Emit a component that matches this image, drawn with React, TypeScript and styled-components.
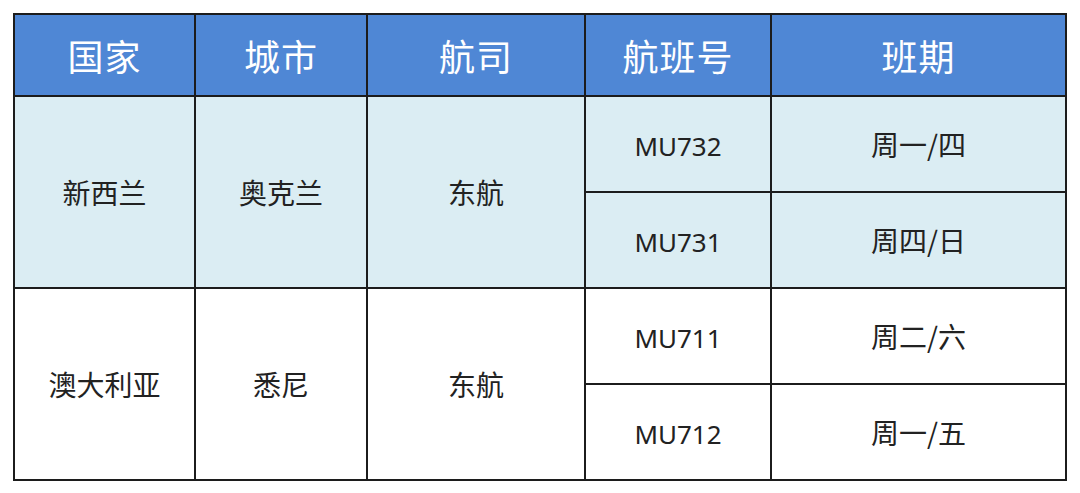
import React from "react";
import styled, { createGlobalStyle } from "styled-components";

const Global = createGlobalStyle`
  html, body { margin: 0; padding: 0; background: #ffffff; }
  body { font-family: "Noto Sans CJK SC", "Noto Sans", sans-serif; }
`;

const Page = styled.div`
  padding: 13px 0 0 13px;
`;

const Table = styled.table`
  border-collapse: collapse;
  table-layout: fixed;
  width: 1054px;
  border: 2px solid #1c1c1c;
`;

const HeadCell = styled.th`
  background: #4f87d5;
  color: #ffffff;
  font-size: 36px;
  font-weight: 400;
  height: 80px;
  padding: 0;
  border: 2px solid #1c1c1c;
  text-align: center;
  vertical-align: middle;
  letter-spacing: 1px;
`;

const Cell = styled.td<{ $tint?: boolean }>`
  background: ${(p) => (p.$tint ? "#dbedf3" : "#ffffff")};
  color: #222222;
  font-size: 28px;
  font-weight: 400;
  height: 94px;
  padding: 0;
  border: 2px solid #1c1c1c;
  text-align: center;
  vertical-align: middle;
`;

const Code = styled.span`
  font-family: "Noto Sans", "Noto Sans CJK SC", sans-serif;
  font-size: 26px;
`;

const widths = [181, 172, 218, 186, 295];
const headers = ["国家", "城市", "航司", "航班号", "班期"];

type Group = {
  country: string;
  city: string;
  airline: string;
  flights: { code: string; days: string }[];
  tint: boolean;
};

const groups: Group[] = [
  {
    country: "新西兰",
    city: "奥克兰",
    airline: "东航",
    tint: true,
    flights: [
      { code: "MU732", days: "周一/四" },
      { code: "MU731", days: "周四/日" },
    ],
  },
  {
    country: "澳大利亚",
    city: "悉尼",
    airline: "东航",
    tint: false,
    flights: [
      { code: "MU711", days: "周二/六" },
      { code: "MU712", days: "周一/五" },
    ],
  },
];

export default function App() {
  return (
    <Page>
      <Global />
      <Table>
        <colgroup>
          {widths.map((w, i) => (
            <col key={i} style={{ width: w }} />
          ))}
        </colgroup>
        <thead>
          <tr>
            {headers.map((h) => (
              <HeadCell key={h}>{h}</HeadCell>
            ))}
          </tr>
        </thead>
        <tbody>
          {groups.map((g) =>
            g.flights.map((f, i) => (
              <tr key={f.code}>
                {i === 0 && (
                  <>
                    <Cell $tint={g.tint} rowSpan={g.flights.length}>
                      {g.country}
                    </Cell>
                    <Cell $tint={g.tint} rowSpan={g.flights.length}>
                      {g.city}
                    </Cell>
                    <Cell $tint={g.tint} rowSpan={g.flights.length}>
                      {g.airline}
                    </Cell>
                  </>
                )}
                <Cell $tint={g.tint}>
                  <Code>{f.code}</Code>
                </Cell>
                <Cell $tint={g.tint}>{f.days}</Cell>
              </tr>
            ))
          )}
        </tbody>
      </Table>
    </Page>
  );
}
